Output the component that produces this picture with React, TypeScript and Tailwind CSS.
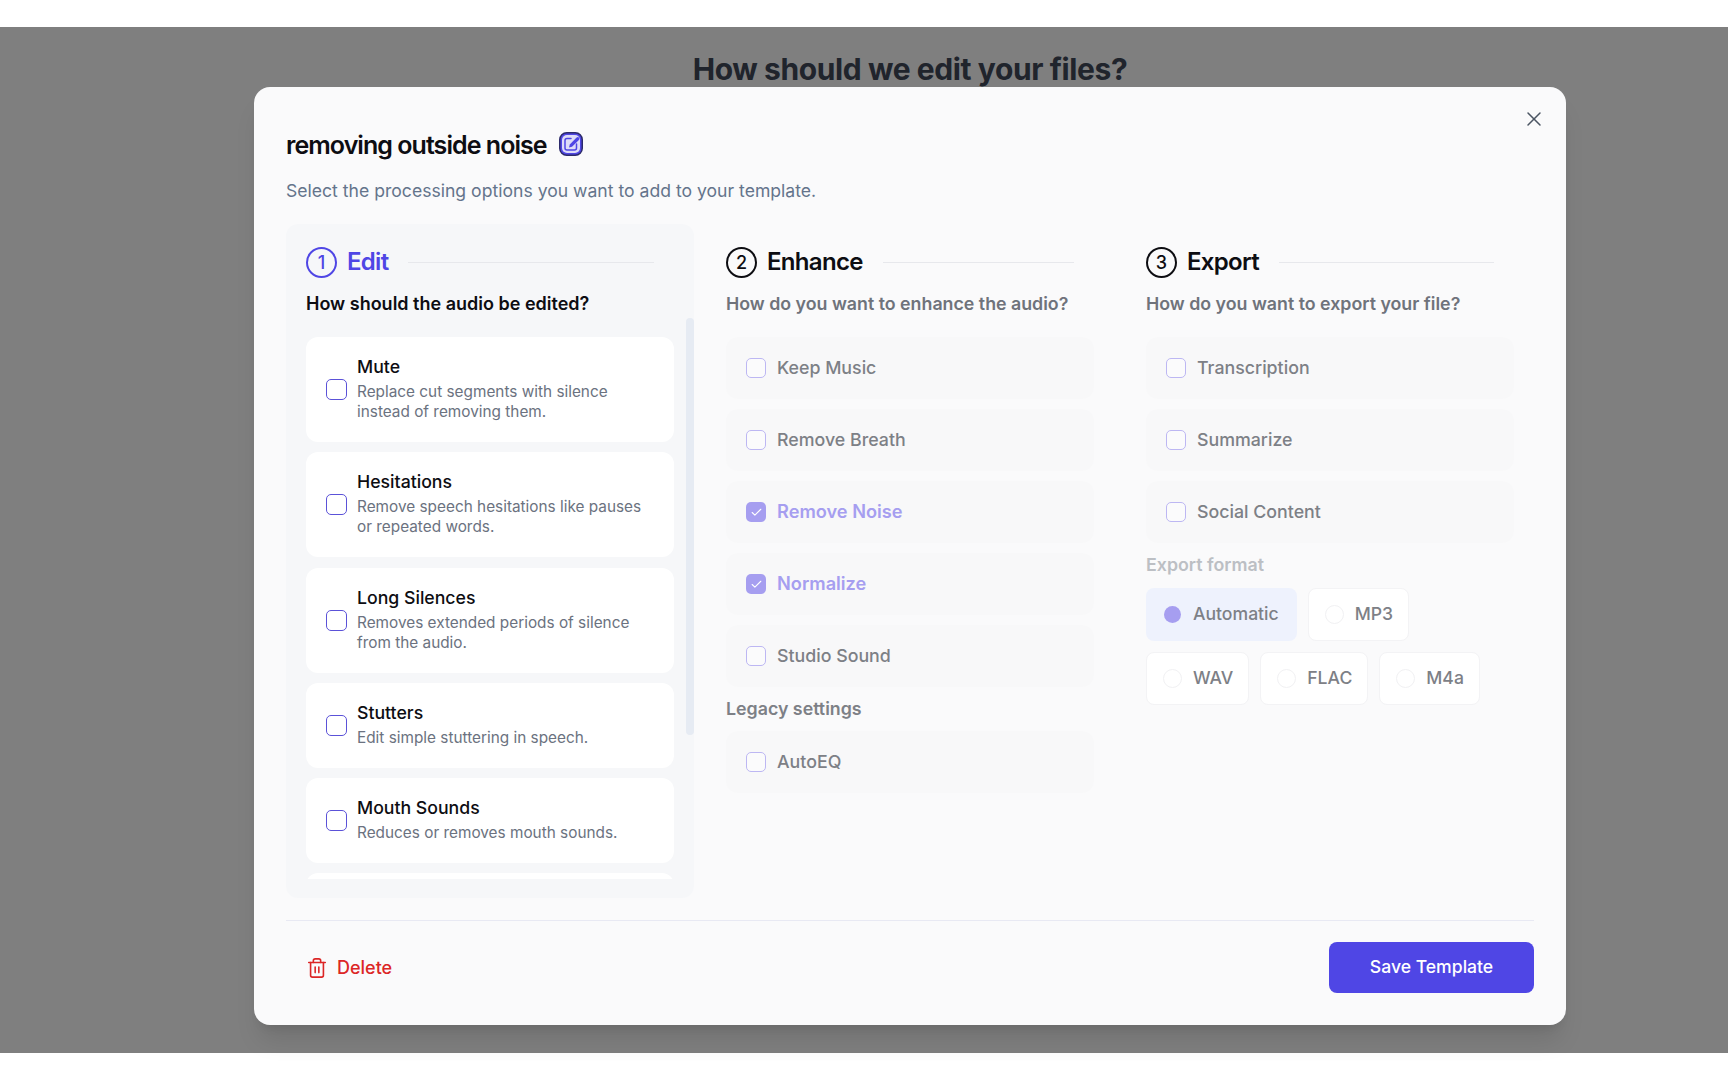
import { Check, Trash2, X } from "lucide-react";

const font = "font-['Inter',sans-serif]";

function StepHeader({ n, title, active }: { n: number; title: string; active?: boolean }) {
  return (
    <div className="flex items-center pr-5">
      <span
        className={`flex h-[31px] w-[31px] shrink-0 items-center justify-center rounded-full border-[2.5px] text-[18px] font-medium ${
          active ? "border-[#4f46e5] text-[#4f46e5]" : "border-[#0d0d12] text-[#0d0d12]"
        }`}
      >
        {n}
      </span>
      <span
        className={`ml-[10px] text-[24px] leading-8 font-semibold tracking-[-0.7px] ${
          active ? "text-[#4f46e5]" : "text-[#0d0d12]"
        }`}
      >
        {title}
      </span>
      <span className="ml-[20px] h-px flex-1 bg-[#e7e8ec]" />
    </div>
  );
}

function Question({ text, active }: { text: string; active?: boolean }) {
  return (
    <p
      className={`mt-[14px] leading-6 font-semibold ${
        active ? "text-[18px] text-[#0d0d12]" : "text-[17.8px] text-[#6f737b]"
      }`}
    >
      {text}
    </p>
  );
}

function Box({ checked, strong }: { checked?: boolean; strong?: boolean }) {
  if (checked) {
    return (
      <span className="flex h-5 w-5 shrink-0 items-center justify-center rounded-[5px] bg-[#a69ef0] text-white">
        <Check size={13} strokeWidth={2} />
      </span>
    );
  }
  if (strong) {
    return <span className="mt-[2px] h-[21px] w-[21px] shrink-0 rounded-[5px] border-[1.75px] border-[#5b52d8] bg-white" />;
  }
  return <span className="h-5 w-5 shrink-0 rounded-[5px] border-[1.75px] border-[#bdb7f3] bg-[#fbfbfc]" />;
}

function DimOption({ label, checked }: { label: string; checked?: boolean }) {
  return (
    <div className="flex h-[62px] items-center gap-[11px] rounded-xl bg-[#f8f8f9] px-5">
      <Box checked={checked} />
      <span
        className={
          checked
            ? "text-[18.2px] font-semibold text-[#a69ef0]"
            : "text-[17.8px] font-medium text-[#7d8086]"
        }
      >
        {label}
      </span>
    </div>
  );
}

function EditOption({ title, desc }: { title: string; desc: string[] }) {
  return (
    <div className="flex shrink-0 items-center gap-[10px] rounded-xl bg-white pt-[18px] pr-5 pb-5 pl-5">
      <Box strong />
      <div>
        <p className="text-[17.7px] leading-6 font-medium text-[#0d0d12]">{title}</p>
        <p className="mt-[3px] text-[15.35px] leading-5 text-[#6b7280]">
          {desc.map((line) => (
            <span key={line} className="block">
              {line}
            </span>
          ))}
        </p>
      </div>
    </div>
  );
}

function Radio({ label, selected }: { label: string; selected?: boolean }) {
  return (
    <div
      className={`flex h-[53px] items-center gap-[11px] rounded-lg ${
        selected ? "bg-[#eef2fd] pr-[18px] pl-[17px]" : "border border-[#f3f3f5] bg-white pr-[15px] pl-4"
      }`}
    >
      {selected ? (
        <span className="flex h-[19px] w-[19px] items-center justify-center">
          <span className="h-[17px] w-[17px] rounded-full bg-[#a69ef0]" />
        </span>
      ) : (
        <span className="h-[19px] w-[19px] rounded-full border border-[#f1f1f3] bg-white" />
      )}
      <span className="text-[17.6px] font-medium text-[#7d8086]">{label}</span>
    </div>
  );
}

function EditIcon() {
  return (
    <svg className="-mt-[2px]" width="24" height="24" viewBox="0 0 24 24" fill="none">
      <rect x="0.75" y="0.75" width="22.5" height="22.5" rx="7" fill="#4f46e5" stroke="#2c2a6b" strokeWidth="1.5" />
      <rect x="3" y="3" width="18" height="18" rx="5" fill="#dddcf8" />
      <path d="M12 6.5H8a2 2 0 0 0-2 2V16a2 2 0 0 0 2 2h7.5a2 2 0 0 0 2-2v-4" stroke="#4f46e5" strokeWidth="1.5" strokeLinecap="round" />
      <path d="M17.6 5.6a1.6 1.6 0 0 1 2.3 2.3L13 14.8l-3 .8.8-3z" fill="#4f46e5" />
    </svg>
  );
}

export default function App() {
  return (
    <div className={`h-[1080px] w-[1728px] overflow-hidden bg-white pt-[27px] ${font}`}>
      <div className="h-[1026px] bg-[#7f7f7f] pl-[254px]">
        <div className="w-[1312px]">
          <h1 className="h-[60px] pt-[22px] text-center text-[30px] leading-10 font-bold tracking-[-0.4px] text-[#20242c]">
            How should we edit your files?
          </h1>

          {/* Modal */}
          <div className="relative h-[938px] rounded-2xl bg-[#fafafb] px-8 shadow-xl">
            <button className="absolute top-[20px] right-[20px] text-[#4b5563]">
              <X size={24} strokeWidth={1.5} />
            </button>

            <div className="flex items-center gap-[12px] pt-[42px]">
              <h2 className="text-[25px] leading-8 font-semibold tracking-[-0.95px] text-[#0d0d12]">
                removing outside noise
              </h2>
              <EditIcon />
            </div>
            <p className="mt-[16px] text-[17.6px] leading-7 text-[#64748b]">
              Select the processing options you want to add to your template.
            </p>

            <div className="mt-[19px] grid h-[674px] grid-cols-3 gap-3">
              {/* Edit column */}
              <section className="relative flex flex-col rounded-xl bg-[#f6f7f9] px-5 pt-[22px]">
                <StepHeader n={1} title="Edit" active />
                <Question text="How should the audio be edited?" active />
                <div className="mt-[21px] flex h-[542px] flex-col gap-[10.25px] overflow-hidden">
                  <EditOption title="Mute" desc={["Replace cut segments with silence", "instead of removing them."]} />
                  <EditOption title="Hesitations" desc={["Remove speech hesitations like pauses", "or repeated words."]} />
                  <EditOption title="Long Silences" desc={["Removes extended periods of silence", "from the audio."]} />
                  <EditOption title="Stutters" desc={["Edit simple stuttering in speech."]} />
                  <EditOption title="Mouth Sounds" desc={["Reduces or removes mouth sounds."]} />
                  <div className="h-[84px] shrink-0 rounded-xl bg-white" />
                </div>
                {/* scrollbar */}
                <span className="absolute top-[94px] right-0 h-[417px] w-2 rounded-full bg-[#e6ebf3]" />
              </section>

              {/* Enhance column */}
              <section className="px-5 pt-[22px]">
                <StepHeader n={2} title="Enhance" />
                <Question text="How do you want to enhance the audio?" />
                <div className="mt-[21px] flex flex-col gap-[10px]">
                  <DimOption label="Keep Music" />
                  <DimOption label="Remove Breath" />
                  <DimOption label="Remove Noise" checked />
                  <DimOption label="Normalize" checked />
                  <DimOption label="Studio Sound" />
                </div>
                <p className="mt-[10px] text-[17.8px] leading-[24px] font-semibold text-[#7d8086]">Legacy settings</p>
                <div className="mt-[10px]">
                  <DimOption label="AutoEQ" />
                </div>
              </section>

              {/* Export column */}
              <section className="px-5 pt-[22px]">
                <StepHeader n={3} title="Export" />
                <Question text="How do you want to export your file?" />
                <div className="mt-[21px] flex flex-col gap-[10px]">
                  <DimOption label="Transcription" />
                  <DimOption label="Summarize" />
                  <DimOption label="Social Content" />
                </div>
                <p className="mt-[10px] text-[17.8px] leading-[24px] font-semibold text-[#bcbfc4]">Export format</p>
                <div className="mt-[11px] flex flex-col gap-[11px]">
                  <div className="flex gap-[11px]">
                    <Radio label="Automatic" selected />
                    <Radio label="MP3" />
                  </div>
                  <div className="flex gap-[11px]">
                    <Radio label="WAV" />
                    <Radio label="FLAC" />
                    <Radio label="M4a" />
                  </div>
                </div>
              </section>
            </div>

            {/* Footer */}
            <div className="mt-[22px] flex items-center justify-between border-t border-[#e8e9f3] pt-[21px]">
              <button className="flex items-center gap-[9px] pl-5 text-[18px] font-medium text-[#dc2626]">
                <Trash2 size={22} strokeWidth={1.75} />
                Delete
              </button>
              <button className="flex h-[51px] w-[205px] items-center justify-center rounded-lg bg-[#4f46e5] text-[17.6px] font-medium text-white">
                Save Template
              </button>
            </div>
          </div>
        </div>
      </div>
    </div>
  );
}
